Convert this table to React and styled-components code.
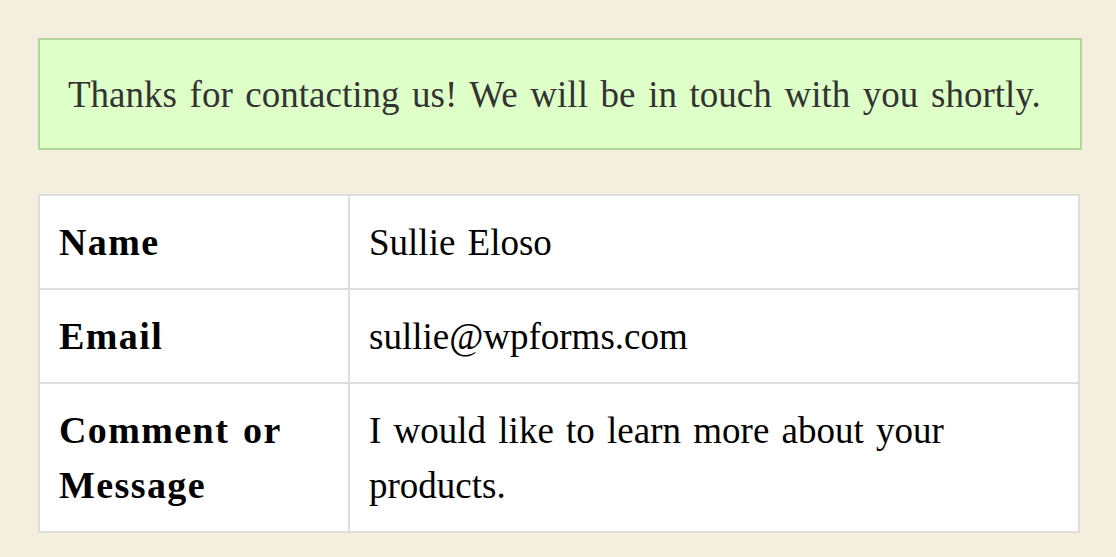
import React from 'react'
import styled, { createGlobalStyle } from 'styled-components'

const GlobalStyle = createGlobalStyle`
  html, body {
    margin: 0;
    padding: 0;
    background: #f4eede;
  }
  body {
    font-family: "Liberation Serif", "DejaVu Serif", serif;
  }
`

const Page = styled.div`
  padding: 38px 34px 24px 38px;
  display: flex;
  flex-direction: column;
  gap: 44px;
`

const Notice = styled.div`
  box-sizing: border-box;
  width: 1044px;
  height: 112px;
  display: flex;
  align-items: center;
  padding: 0 28px;
  background: #dfffc8;
  border: 2px solid #b3d59b;
  color: #333;
  font-size: 37px;
  word-spacing: 3.4px;
`

const Table = styled.table`
  width: 1042px;
  border-collapse: collapse;
  background: #fff;
  border: 2px solid #dddddd;
  color: #000;
`

const Row = styled.tr`
  border-bottom: 2px solid #dddddd;
`

const Cell = styled.td`
  box-sizing: border-box;
  padding: 16px 19px;
  height: ${(p) => p.$h || 94}px;
  line-height: 55px;
  vertical-align: middle;
  border-right: ${(p) => (p.$label ? '2px solid #dddddd' : 'none')};
  width: ${(p) => (p.$label ? '310px' : 'auto')};
  font-weight: ${(p) => (p.$label ? 700 : 400)};
  font-size: ${(p) => (p.$label ? 38 : 37)}px;
  letter-spacing: ${(p) => (p.$label ? '1.4px' : '0')};
  word-spacing: 3px;
`

const rows = [
  { label: ['Name'], value: ['Sullie Eloso'] },
  { label: ['Email'], value: ['sullie@wpforms.com'] },
  {
    label: ['Comment or', 'Message'],
    value: ['I would like to learn more about your', 'products.'],
    h: 149,
  },
]

const Lines = ({ parts }) =>
  parts.map((t, i) => (
    <React.Fragment key={i}>
      {i > 0 && <br />}
      {t}
    </React.Fragment>
  ))

export default function App() {
  return (
    <>
      <GlobalStyle />
      <Page>
        <Notice>Thanks for contacting us! We will be in touch with you shortly.</Notice>
        <Table>
          <tbody>
            {rows.map((r) => (
              <Row key={r.label[0]}>
                <Cell $label $h={r.h}><Lines parts={r.label} /></Cell>
                <Cell $h={r.h}><Lines parts={r.value} /></Cell>
              </Row>
            ))}
          </tbody>
        </Table>
      </Page>
    </>
  )
}
